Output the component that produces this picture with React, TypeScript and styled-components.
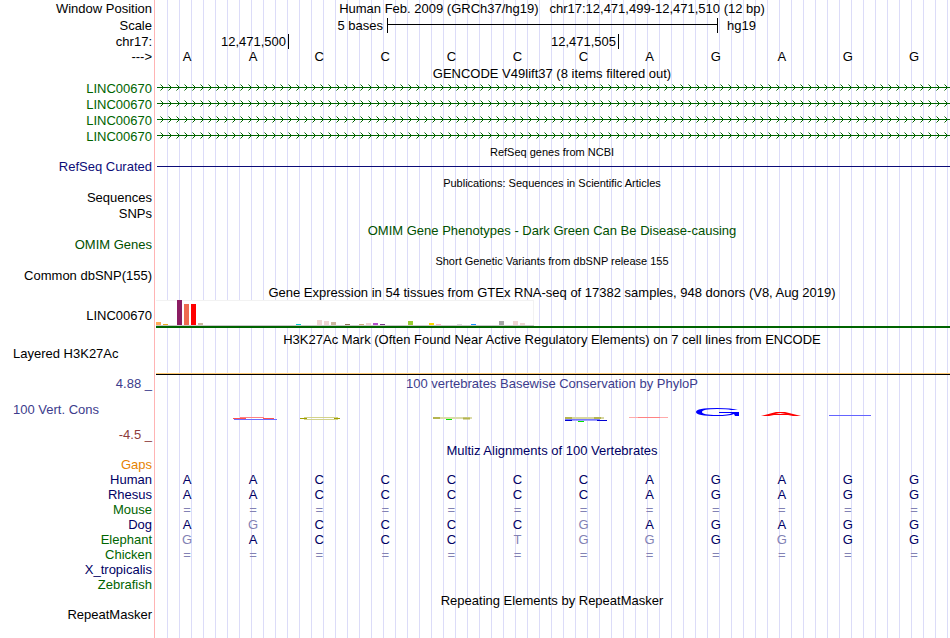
import React from "react";
import styled, { createGlobalStyle, css } from "styled-components";

const Global = createGlobalStyle`
  body { margin: 0; background: #fff; }
  #root { overflow: hidden; }
`;

const NAVY = "#000064";
const GREEN = "#006400";
const BLUE = "#3c3c8c";
const MUTED = "#8282b4";

const Browser = styled.main`
  display: flex;
  flex-direction: column;
  min-height: 100vh;
  font: 13px/15px "Liberation Sans", Arial, sans-serif;
  color: #000;
  background:
    linear-gradient(#ffb4b4, #ffb4b4) 154px 0 / 1px 100% no-repeat,
    repeating-linear-gradient(to right, #dcdcf8 0 1px, transparent 1px 12px) 167px 0 / 100% 100% no-repeat;
`;

const Row = styled.section<{ $h?: number; $top?: boolean }>`
  display: grid;
  grid-template-columns: 154px minmax(0, 1fr);
  min-height: ${(p) => p.$h ?? 16}px;
  align-items: ${(p) => (p.$top ? "start" : "center")};
`;

const Label = styled.div<{ $color?: string; $left?: boolean }>`
  padding: 0 2px 0 13px;
  text-align: ${(p) => (p.$left ? "left" : "right")};
  color: ${(p) => p.$color ?? "#000"};
  white-space: nowrap;
`;

const Title = styled.h2<{ $color?: string; $small?: boolean }>`
  grid-column: 2;
  align-self: start;
  margin: 0;
  padding-top: 2px;
  font-weight: normal;
  font-size: ${(p) => (p.$small ? 11 : 13)}px;
  line-height: 13px;
  text-align: center;
  white-space: pre;
  color: ${(p) => p.$color ?? "#000"};
`;

const Bases = styled.div`
  display: grid;
  grid-template-columns: repeat(12, 1fr);
  padding-right: 3px;
  text-align: center;
`;

const Base = styled.span<{ $color: string }>`
  color: ${(p) => p.$color};
`;

const ScaleBar = styled.div`
  display: grid;
  grid-template-columns: 233fr 331fr 232fr;
  align-items: center;
`;

const ScaleText = styled.span<{ $end?: boolean }>`
  text-align: ${(p) => (p.$end ? "right" : "left")};
  padding: ${(p) => (p.$end ? "0 4px 0 0" : "0 0 0 9px")};
`;

const ScaleLine = styled.span`
  height: 15px;
  border: solid #000;
  border-width: 0 1px;
  background: linear-gradient(#000, #000) 0 6px / 100% 1px no-repeat;
`;

const Ruler = styled.div`
  display: grid;
  grid-template-columns: 135fr 330fr 331fr;
`;

const Tick = styled.span`
  border-right: 1px solid #000;
  padding-right: 2px;
  text-align: right;
`;

const drawing = css`
  display: block;
  width: 100%;
`;

const GeneLine = styled.svg`
  ${drawing}
  height: 16px;
`;

const Rule = styled.div<{ $color: string }>`
  margin-left: 3px;
  height: 1px;
  background: ${(p) => p.$color};
`;

const Expression = styled.div`
  align-self: start;
  margin-left: 2px;
  border-bottom: 2px solid ${GREEN};
`;

const Bars = styled.svg`
  display: block;
  width: 378px;
  height: 26px;
  background: #fff;
`;

const Histone = styled.div`
  align-self: end;
  margin-left: 2px;
  border-top: 1px solid #ffc870;
  border-bottom: 1px solid #000;
`;

const Logo = styled.svg`
  ${drawing}
  height: 34px;
`;

function Gene({ id }: { id: string }) {
  return (
    <Row>
      <Label $color={GREEN}>LINC00670</Label>
      <GeneLine aria-hidden="true" shapeRendering="crispEdges">
        <defs>
          <pattern id={id} x="5" width="8" height="16" patternUnits="userSpaceOnUse">
            <path d="M1 4h1v1h-1zM1 10h1v1h-1z" fill={GREEN} opacity="0.5" />
            <path d="M2 5h1v1h-1zM3 6h1v1h-1zM3 8h1v1h-1zM2 9h1v1h-1z" fill={GREEN} />
          </pattern>
        </defs>
        <rect x="5" width="100%" height="16" fill={`url(#${id})`} />
        <rect x="3" y="7" width="100%" height="1" fill={GREEN} />
      </GeneLine>
    </Row>
  );
}

function Sequence({ text, plain }: { text: string; plain?: boolean }) {
  return (
    <Bases>
      {text.split("").map((c, i) => (
        <Base key={i} $color={plain ? "#000" : c === "=" || c !== c.toUpperCase() ? MUTED : NAVY}>
          {c.toUpperCase()}
        </Base>
      ))}
    </Bases>
  );
}

const tissues: [number, number, string][] = [
  [0, 3, "#ffaa56"], [7, 1, "#eeaa22"], [21, 25, "#8b1c62"], [28, 21, "#ee6a50"],
  [35, 21, "#ff0000"], [42, 2, "#cdb79e"], [140, 1, "#00cdcd"], [161, 5, "#eed5d2"],
  [168, 4, "#eed5d2"], [175, 3, "#cdb79e"], [189, 1, "#8b7355"], [203, 1, "#cdaa7d"],
  [210, 2, "#eed5d2"], [217, 2, "#b452cd"], [224, 1, "#7a378b"], [252, 4, "#9acd32"],
  [273, 2, "#ffd700"], [280, 1, "#ffb6c1"], [301, 1, "#d9d9d9"], [315, 1, "#1e90ff"],
  [343, 4, "#a6a6a6"], [357, 4, "#eed5d2"], [364, 2, "#eed5d2"],
];

const species: [string, string, string][] = [
  ["Human", NAVY, "AACCCCCAGAGG"],
  ["Rhesus", NAVY, "AACCCCCAGAGG"],
  ["Mouse", GREEN, "============"],
  ["Dog", NAVY, "AgCCCCgAGAGG"],
  ["Elephant", GREEN, "gACCCtggGgGG"],
  ["Chicken", GREEN, "============"],
  ["X_tropicalis", NAVY, ""],
  ["Zebrafish", GREEN, ""],
];

export default function App() {
  return (
    <>
      <Global />
      <Browser>
        <Row $h={17}>
          <Label>Window Position</Label>
          <Title>{"Human Feb. 2009 (GRCh37/hg19)   chr17:12,471,499-12,471,510 (12 bp)"}</Title>
        </Row>
        <Row $h={17}>
          <Label>Scale</Label>
          <ScaleBar>
            <ScaleText $end>5 bases</ScaleText>
            <ScaleLine />
            <ScaleText>hg19</ScaleText>
          </ScaleBar>
        </Row>
        <Row $h={15}>
          <Label>chr17:</Label>
          <Ruler>
            <Tick>12,471,500</Tick>
            <Tick>12,471,505</Tick>
          </Ruler>
        </Row>
        <Row $top>
          <Label>---&gt;</Label>
          <Sequence text="AACCCCCAGAGG" plain />
        </Row>
        <Row $h={15}>
          <Title>GENCODE V49lift37 (8 items filtered out)</Title>
        </Row>
        {["a", "b", "c", "d"].map((k) => (
          <Gene key={k} id={`strand-${k}`} />
        ))}
        <Row $h={15}>
          <Title $small>RefSeq genes from NCBI</Title>
        </Row>
        <Row $top>
          <Label $color="#0c0c78">RefSeq Curated</Label>
          <GeneLine aria-hidden="true" shapeRendering="crispEdges">
            <rect x="3" y="7" width="100%" height="1" fill="#0c0c78" />
          </GeneLine>
        </Row>
        <Row $h={15}>
          <Title $small>Publications: Sequences in Scientific Articles</Title>
        </Row>
        <Row $top><Label>Sequences</Label></Row>
        <Row $top><Label>SNPs</Label></Row>
        <Row $h={15}>
          <Title $color="#005000">OMIM Gene Phenotypes - Dark Green Can Be Disease-causing</Title>
        </Row>
        <Row $top><Label $color="#005000">OMIM Genes</Label></Row>
        <Row $h={15}>
          <Title $small>Short Genetic Variants from dbSNP release 155</Title>
        </Row>
        <Row $top><Label>Common dbSNP(155)</Label></Row>
        <Row>
          <Title>Gene Expression in 54 tissues from GTEx RNA-seq of 17382 samples, 948 donors (V8, Aug 2019)</Title>
        </Row>
        <Row $h={31}>
          <Label>LINC00670</Label>
          <Expression>
            <Bars role="img" aria-label="Expression by tissue" shapeRendering="crispEdges">
              <rect width="378" height="1" fill="#f2f2f2" />
              <rect x="377" width="1" height="26" fill="#f2f2f2" />
              <rect y="25" width="378" height="1" fill="#c8c8c8" />
              {tissues.map(([x, h, fill]) => (
                <rect key={x} x={x} y={25 - h} width="5" height={h} fill={fill} />
              ))}
            </Bars>
          </Expression>
        </Row>
        <Row $h={15}>
          <Title>H3K27Ac Mark (Often Found Near Active Regulatory Elements) on 7 cell lines from ENCODE</Title>
        </Row>
        <Row $h={29} $top>
          <Label $left>Layered H3K27Ac</Label>
          <Histone />
        </Row>
        <Row $h={17}>
          <Label $color={BLUE}>4.88 _</Label>
          <Title $color={BLUE}>100 vertebrates Basewise Conservation by PhyloP</Title>
        </Row>
        <Row $h={34}>
          <Label $left $color={BLUE}>100 Vert. Cons</Label>
          <Logo role="img" aria-label="Conservation logo" viewBox="0 0 796 34" preserveAspectRatio="none">
            <g fill="none">
              <path d="M79 26.5H92M109 26.5H120" stroke="#ff5050" />
              <path d="M86 25.5H110" stroke="#ff8282" />
              <path d="M80 27.5H123" stroke="#6e6eff" />
              <path d="M150 25.5H184M150 27.5H184" stroke="#d2d28c" />
              <path d="M146 26.5H153M180 26.5H186" stroke="#a0a000" />
              <path d="M279 26H318" stroke="#dcdcaa" strokeWidth="2" />
              <path d="M279 26H286M309 26.5H316" stroke="#b4b450" strokeWidth="2" />
              <path d="M292 27.5H298" stroke="#00e600" />
              <path d="M411 26H450" stroke="#d7d7a0" strokeWidth="2" />
              <path d="M411 26H418M440 26H447" stroke="#b4b450" strokeWidth="2" />
              <path d="M411 27.5H446" stroke="#7878ff" />
              <path d="M411 28.5H418M443 28.5H453" stroke="#0000d2" />
              <path d="M418 28.5H443" stroke="#a0a0ff" />
              <path d="M424 29.5H430" stroke="#00e600" />
              <path d="M475 25.5H514" stroke="#ffaaaa" />
              <path d="M484 25.5H506" stroke="#ff8282" />
              <path d="M675 23.5H717" stroke="#6464ff" />
            </g>
            <path
              d="M584 18Q578 16 563 16Q542 16 542 20Q542 24 563 24Q575 24 580 22L581 24H585V20H565V21H578Q575 23 563 23Q548 23 548 20Q548 17 563 17Q573 17 577 18Z"
              fill="#0000ff"
            />
            <path d="M607 24L622 20H631L647 24H639L634 23H620L615 24ZM626 21L621 22H632Z" fill="#ff0000" fillRule="evenodd" />
          </Logo>
        </Row>
        <Row><Label $color="#8c3c3c">-4.5 _</Label></Row>
        <Row $h={15}>
          <Title $color={NAVY}>Multiz Alignments of 100 Vertebrates</Title>
        </Row>
        <Row $h={15}><Label $color="#e68200">Gaps</Label></Row>
        {species.map(([name, color, text]) => (
          <Row key={name} $h={15}>
            <Label $color={color}>{name}</Label>
            <Sequence text={text} />
          </Row>
        ))}
        <Row $h={15}>
          <Title>Repeating Elements by RepeatMasker</Title>
        </Row>
        <Row $h={15}><Label>RepeatMasker</Label></Row>
      </Browser>
    </>
  );
}
